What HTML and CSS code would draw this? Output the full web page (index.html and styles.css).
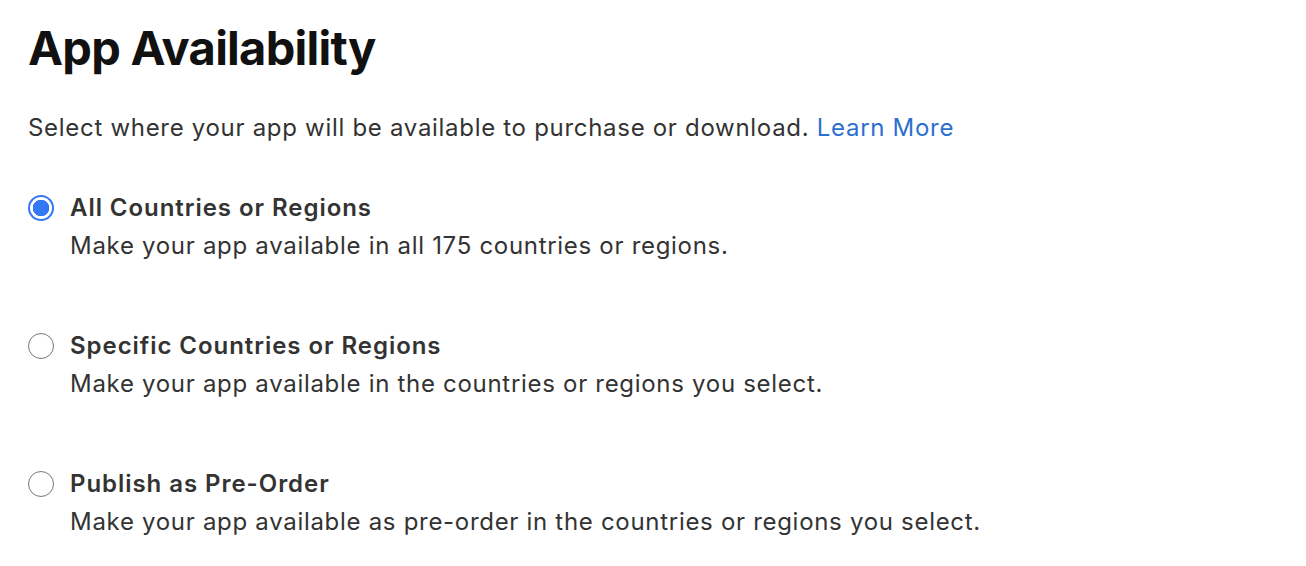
FILE: index.html
```html
<!DOCTYPE html>
<html lang="en">
<head>
    <meta charset="UTF-8">
    <meta name="viewport" content="width=device-width, initial-scale=1.0">
    <title>App Availability</title>
    <link rel="stylesheet" href="styles.css">
</head>
<body>
    <div class="page">
        <h1 class="title">App Availability</h1>
        <p class="intro">Select where your app will be available to purchase or download. <a href="#">Learn More</a></p>
        <div class="options">
            <label class="option">
                <input type="radio" name="availability" checked>
                <span class="radio"></span>
                <span class="option-text">
                    <span class="option-title">All Countries or Regions</span>
                    <span class="option-desc">Make your app available in all 175 countries or regions.</span>
                </span>
            </label>
            <label class="option">
                <input type="radio" name="availability">
                <span class="radio"></span>
                <span class="option-text">
                    <span class="option-title">Specific Countries or Regions</span>
                    <span class="option-desc">Make your app available in the countries or regions you select.</span>
                </span>
            </label>
            <label class="option">
                <input type="radio" name="availability">
                <span class="radio"></span>
                <span class="option-text">
                    <span class="option-title">Publish as Pre-Order</span>
                    <span class="option-desc">Make your app available as pre-order in the countries or regions you select.</span>
                </span>
            </label>
        </div>
    </div>
</body>
</html>
```

FILE: styles.css
```css
* {
    margin: 0;
    padding: 0;
    box-sizing: border-box;
}
body {
    background: #fff;
    font-family: 'Inter', 'Liberation Sans', sans-serif;
    color: #333;
}
.page {
    padding: 20px 28px;
}
.title {
    font-size: 47px;
    font-weight: 700;
    color: #111;
    letter-spacing: -0.75px;
    line-height: 56px;
}
.intro {
    margin-top: 36px;
    font-size: 24px;
    letter-spacing: 0.7px;
    line-height: 32px;
}
.intro a {
    color: #2c6fd1;
    text-decoration: none;
}
.options {
    margin-top: 46px;
    display: flex;
    flex-direction: column;
    gap: 63px;
}
.option {
    display: flex;
    gap: 16px;
    cursor: pointer;
}
.option input {
    display: none;
}
.radio {
    flex: none;
    width: 26px;
    height: 26px;
    margin-top: 5px;
    border: 1.5px solid #777;
    border-radius: 50%;
}
.option input:checked + .radio {
    border: 2.5px solid #3478f6;
    background: radial-gradient(circle, #3478f6 0 8px, #fff 8.5px);
}
.option-text {
    display: flex;
    flex-direction: column;
}
.option-title {
    font-size: 24px;
    font-weight: 600;
    letter-spacing: 0.95px;
    line-height: 36px;
}
.option-desc {
    font-size: 24px;
    letter-spacing: 0.7px;
    line-height: 39px;
}
```
